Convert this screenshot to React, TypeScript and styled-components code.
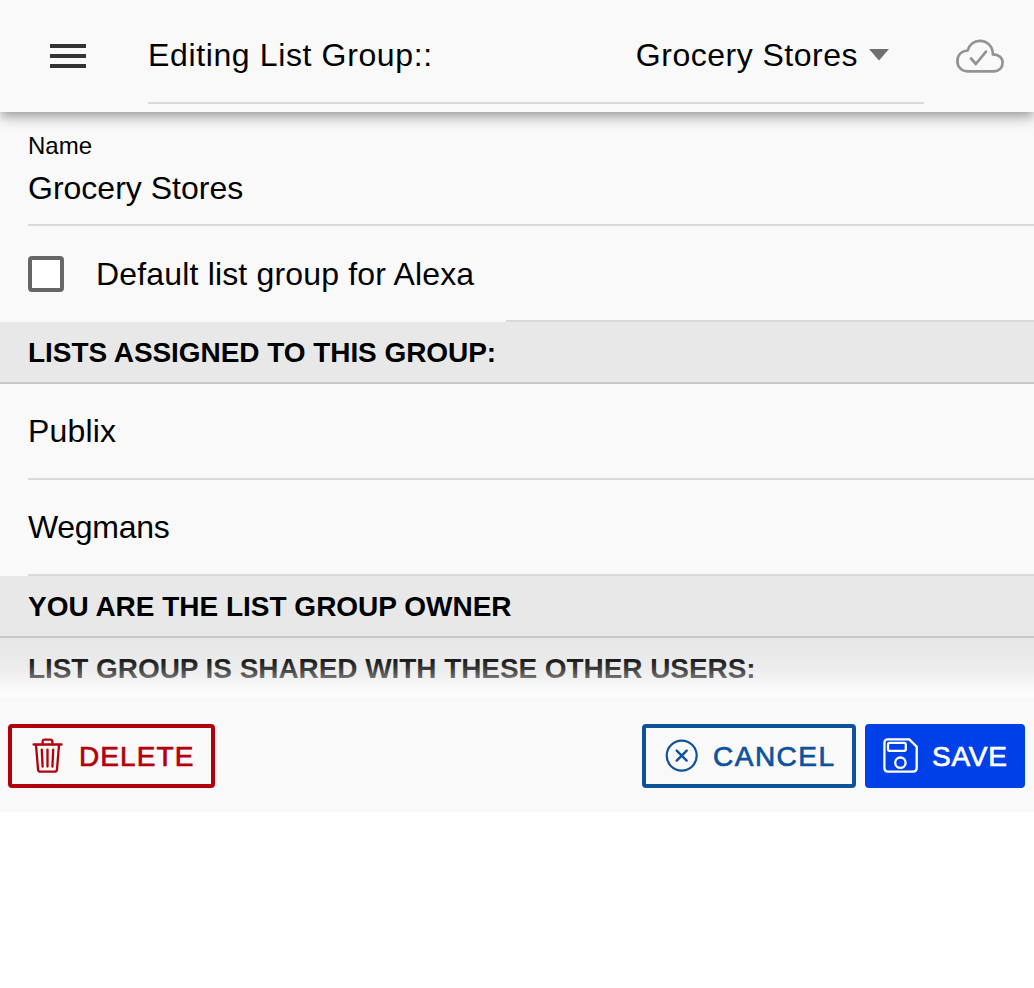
import React from "react";
import styled, { createGlobalStyle } from "styled-components";

const GlobalStyle = createGlobalStyle`
  * { box-sizing: border-box; }
  body {
    margin: 0;
    background: #fff;
    color: #000;
    font-family: "Liberation Sans", Arial, sans-serif;
    overflow: hidden;
  }
`;

const Page = styled.div`
  width: 1034px;
  height: 812px;
  display: flex;
  flex-direction: column;
  background: #f9f9f9;
`;

const Header = styled.header`
  position: relative;
  z-index: 2;
  flex: none;
  height: 112px;
  display: flex;
  align-items: flex-start;
  background: #f9f9f9;
  box-shadow: 0 4px 8px -2px rgba(0, 0, 0, 0.2), 0 8px 10px 0 rgba(0, 0, 0, 0.14),
    0 2px 20px 0 rgba(0, 0, 0, 0.12);
`;

const MenuButton = styled.button`
  width: 148px;
  height: 112px;
  padding: 0 0 0 50px;
  border: 0;
  background: none;
  display: flex;
  flex-direction: column;
  justify-content: center;
  gap: 6px;
`;

const MenuBar = styled.span`
  width: 36px;
  height: 4px;
  background: #333;
`;

const GroupSelect = styled.div`
  width: 776px;
  height: 104px;
  padding: 8px 35px 0 0;
  border-bottom: 2px solid #d9d9d9;
  display: flex;
  align-items: center;
  justify-content: space-between;
`;

const Text = styled.span<{ $spacing?: number }>`
  font-size: 32px;
  line-height: 38px;
  white-space: nowrap;
  letter-spacing: ${(p) => p.$spacing ?? 0}px;
`;

const SelectValue = styled.div`
  display: flex;
  align-items: center;
  gap: 11px;
`;

const CloudStatus = styled.div`
  width: 110px;
  height: 112px;
  padding-left: 32px;
  display: flex;
  align-items: center;
`;

const Content = styled.main`
  position: relative;
  flex: none;
  height: 586px;
  overflow: hidden;
`;

const NameField = styled.label`
  height: 114px;
  margin-left: 28px;
  padding-top: 20px;
  border-bottom: 2px solid #d9d9d9;
  display: flex;
  flex-direction: column;
  gap: 9px;
`;

const FieldLabel = styled.span`
  font-size: 24px;
  line-height: 28px;
`;

const CheckRow = styled.label`
  height: 96px;
  padding-left: 28px;
  display: flex;
  align-items: stretch;
  gap: 32px;
`;

const Checkbox = styled.span`
  flex: none;
  align-self: center;
  width: 36px;
  height: 36px;
  border: 4px solid #666;
  border-radius: 4px;
  background: #fff;
`;

const CheckLabel = styled.span`
  width: 410px;
  display: flex;
  align-items: center;
`;

const CheckEnd = styled.span`
  flex: 1;
  margin-left: -32px;
  border-bottom: 2px solid #d9d9d9;
`;

const ListRow = styled.div`
  height: 96px;
  margin-left: 28px;
  border-bottom: 2px solid #d9d9d9;
  display: flex;
  align-items: center;
`;

const Divider = styled.div`
  height: 62px;
  padding: 2px 0 0 28px;
  background: #e8e8e8;
  border-bottom: 2px solid #c8c8c8;
  display: flex;
  align-items: center;
`;

const DividerText = styled.span<{ $spacing: number }>`
  font-size: 28px;
  line-height: 32px;
  font-weight: 700;
  white-space: nowrap;
  letter-spacing: ${(p) => p.$spacing}px;
`;

const Fade = styled.div`
  position: absolute;
  left: 0;
  right: 0;
  bottom: 0;
  height: 64px;
  background: linear-gradient(
    to bottom,
    rgba(255, 255, 255, 0) 0%,
    rgba(255, 255, 255, 0.02) 20%,
    rgba(255, 255, 255, 0.08) 37%,
    rgba(255, 255, 255, 0.2) 52%,
    rgba(255, 255, 255, 0.45) 69%,
    rgba(255, 255, 255, 0.86) 92%,
    rgba(255, 255, 255, 0.92) 100%
  );
`;

const Footer = styled.footer`
  flex: none;
  height: 114px;
  padding: 26px 9px 0 8px;
  display: flex;
  align-items: flex-start;
  gap: 9px;
`;

const ActionButton = styled.button<{ $color: string; $width: number; $pad: number; $filled?: boolean }>`
  width: ${(p) => p.$width}px;
  height: 64px;
  padding: 0 0 0 ${(p) => p.$pad}px;
  border: 4px solid ${(p) => p.$color};
  border-radius: 4px;
  background: ${(p) => (p.$filled ? p.$color : "transparent")};
  color: ${(p) => (p.$filled ? "#fff" : p.$color)};
  display: flex;
  align-items: center;
  font-family: inherit;
`;

const ActionLabel = styled.span<{ $spacing: number }>`
  margin-left: 13px;
  padding-top: 2px;
  font-size: 28px;
  line-height: 32px;
  letter-spacing: ${(p) => p.$spacing}px;
  -webkit-text-stroke: 0.7px currentColor;
`;

const Spacer = styled.div`
  flex: 1;
`;

const CloudDoneIcon = () => (
  <svg width="48" height="34" viewBox="0 0 48 34" fill="none" stroke="#939393" strokeWidth="2.7" strokeLinecap="round" strokeLinejoin="round">
    <path d="M11.6 32.3C5.6 32.3 1.4 28 1.4 22C1.4 16 5.5 12 11.7 11.5C13.2 5.6 18 1.9 24.1 1.9C31 1.9 36.4 7 36.8 14.2L36.8 15.4C43 15.6 46.6 19 46.6 23.8C46.6 28.6 43 32.3 38 32.3Z" />
    <path d="M15 19.4L19.8 25L30 12.6" />
  </svg>
);

const TrashIcon = () => (
  <svg width="36" height="36" viewBox="0 0 36 36" fill="none" stroke="currentColor" strokeWidth="2.3" strokeLinecap="round" strokeLinejoin="round">
    <path d="M3.6 6.5H31.6" />
    <path d="M12.6 6.4V3.8Q12.6 1.6 14.8 1.6H20.2Q22.4 1.6 22.4 3.8V6.4" />
    <path d="M6 7L8 31.4Q8.2 33.7 10.4 33.7H24.6Q26.8 33.7 27 31.4L29 7" />
    <path d="M11.8 11.6L12.6 28.6M17.5 11.6V28.6M23.2 11.6L22.4 28.6" />
  </svg>
);

const CloseCircleIcon = () => (
  <svg width="36" height="36" viewBox="0 0 36 36" fill="none" stroke="currentColor" strokeWidth="2.2" strokeLinecap="round">
    <circle cx="17.7" cy="17.6" r="15" />
    <path d="M12.7 12.6L22.7 22.6M22.7 12.6L12.7 22.6" strokeWidth="2.4" />
  </svg>
);

const SaveIcon = () => (
  <svg width="36" height="36" viewBox="0 0 36 36" fill="none" stroke="currentColor" strokeWidth="2.3" strokeLinejoin="round">
    <path d="M4.9 1.4H26.2L33.7 8.6V30.1Q33.7 33.7 30.2 33.7H4.9Q1.4 33.7 1.4 30.1V4.9Q1.4 1.4 4.9 1.4Z" />
    <rect x="5" y="4.9" width="17.8" height="7.9" rx="1.6" />
    <circle cx="17.4" cy="24.7" r="5.2" />
  </svg>
);

export default function App() {
  return (
    <>
      <GlobalStyle />
      <Page>
        <Header>
          <MenuButton aria-label="Menu">
            <MenuBar />
            <MenuBar />
            <MenuBar />
          </MenuButton>
          <GroupSelect>
            <Text $spacing={0.63}>Editing List Group::</Text>
            <SelectValue>
              <Text $spacing={0.5}>Grocery Stores</Text>
              <svg width="20" height="12" viewBox="0 0 20 12">
                <path d="M0 0H20L10 11.5Z" fill="#6f6f6f" />
              </svg>
            </SelectValue>
          </GroupSelect>
          <CloudStatus>
            <CloudDoneIcon />
          </CloudStatus>
        </Header>
        <Content>
          <NameField>
            <FieldLabel>Name</FieldLabel>
            <Text>Grocery Stores</Text>
          </NameField>
          <CheckRow>
            <Checkbox />
            <CheckLabel>
              <Text $spacing={0.17}>Default list group for Alexa</Text>
            </CheckLabel>
            <CheckEnd />
          </CheckRow>
          <Divider>
            <DividerText $spacing={-0.06}>LISTS ASSIGNED TO THIS GROUP:</DividerText>
          </Divider>
          <ListRow>
            <Text $spacing={0.18}>Publix</Text>
          </ListRow>
          <ListRow>
            <Text $spacing={-0.3}>Wegmans</Text>
          </ListRow>
          <Divider>
            <DividerText $spacing={-0.01}>YOU ARE THE LIST GROUP OWNER</DividerText>
          </Divider>
          <Divider>
            <DividerText $spacing={-0.07}>LIST GROUP IS SHARED WITH THESE OTHER USERS:</DividerText>
          </Divider>
          <Fade />
        </Content>
        <Footer>
          <ActionButton $color="#b3000c" $width={207} $pad={18}>
            <TrashIcon />
            <ActionLabel $spacing={1.1}>DELETE</ActionLabel>
          </ActionButton>
          <Spacer />
          <ActionButton $color="#0f529c" $width={214} $pad={18}>
            <CloseCircleIcon />
            <ActionLabel $spacing={1.5}>CANCEL</ActionLabel>
          </ActionButton>
          <ActionButton $color="#0040e8" $width={160} $pad={14} $filled>
            <SaveIcon />
            <ActionLabel $spacing={0.8}>SAVE</ActionLabel>
          </ActionButton>
        </Footer>
      </Page>
    </>
  );
}
